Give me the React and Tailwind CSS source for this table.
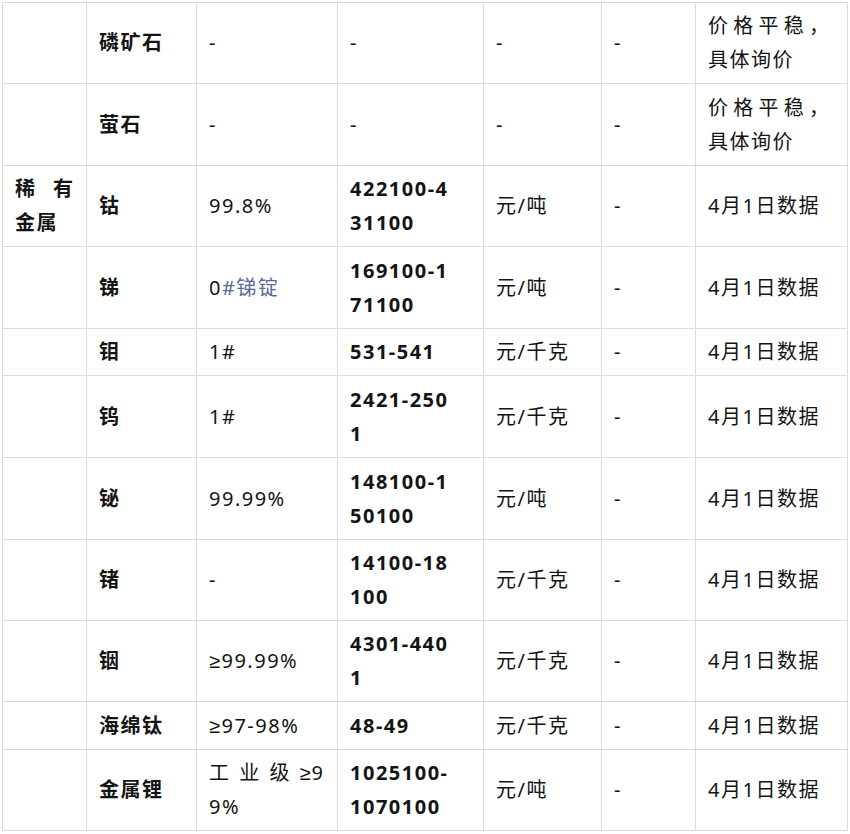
import React from "react";

const rowHeights = [81, 82, 81, 82, 47, 82, 82, 81, 81, 48, 81];

function Spread({ chars, w }) {
  return (
    <div className="flex justify-between" style={{ width: w }}>
      {chars.map((c, i) => (
        <span key={i} className="tracking-normal">{c}</span>
      ))}
    </div>
  );
}

const GE = () => <span className="font-['Liberation_Sans',sans-serif]">≥</span>;

const stable = (
  <div>
    <Spread chars={["价", "格", "平", "稳", "，"]} w="121px" />
    <div>具体询价</div>
  </div>
);

const date = "4月1日数据";

const rows = [
  ["", "磷矿石", "-", "-", "-", "-", stable],
  ["", "萤石", "-", "-", "-", "-", stable],
  [
    <div>
      <Spread chars={["稀", "有"]} w="58px" />
      <div>金属</div>
    </div>,
    "钴",
    "99.8%",
    ["422100-4", "31100"],
    "元/吨",
    "-",
    date,
  ],
  [
    "",
    "锑",
    <span>
      0<span className="text-[#576b95]">#锑锭</span>
    </span>,
    ["169100-1", "71100"],
    "元/吨",
    "-",
    date,
  ],
  ["", "钼", "1#", ["531-541"], "元/千克", "-", date],
  ["", "钨", "1#", ["2421-250", "1"], "元/千克", "-", date],
  ["", "铋", "99.99%", ["148100-1", "50100"], "元/吨", "-", date],
  ["", "锗", "-", ["14100-18", "100"], "元/千克", "-", date],
  ["", "铟", <span><GE />99.99%</span>, ["4301-440", "1"], "元/千克", "-", date],
  ["", "海绵钛", <span><GE />97-98%</span>, ["48-49"], "元/千克", "-", date],
  [
    "",
    "金属锂",
    <div>
      <Spread chars={["工", "业", "级", <span className="tracking-[1px]"><GE />9</span>]} w="115px" />
      <div>9%</div>
    </div>,
    ["1025100-", "1070100"],
    "元/吨",
    "-",
    date,
  ],
];

export default function App() {
  return (
    <div className="bg-white w-[850px] h-[834px] overflow-hidden pt-[2px] pl-[2px]">
      <div
        className="grid grid-cols-[84px_110px_141px_146px_118px_94px_152px] w-fit border-l border-t border-[#dcdcdc] text-[20px] leading-[34px] tracking-[1.5px] text-[#141414] font-['Noto_Sans','Noto_Sans_CJK_SC',sans-serif]"
      >
        {rows.map((r, ri) =>
          r.map((cell, ci) => {
            const bold = ci === 0 || ci === 1 || (ci === 3 && Array.isArray(cell));
            let content = cell;
            if (ci === 3 && Array.isArray(cell)) {
              content = (
                <div>
                  {cell.map((l, i) => (
                    <div key={i} className="whitespace-nowrap">{l}</div>
                  ))}
                </div>
              );
            }
            return (
              <div
                key={ri + "-" + ci}
                style={{ height: rowHeights[ri] }}
                className={
                  "flex items-center px-[12px] border-r border-b border-[#dcdcdc] whitespace-nowrap " +
                  (bold ? "font-bold" : "font-normal")
                }
              >
                {content}
              </div>
            );
          })
        )}
      </div>
    </div>
  );
}
